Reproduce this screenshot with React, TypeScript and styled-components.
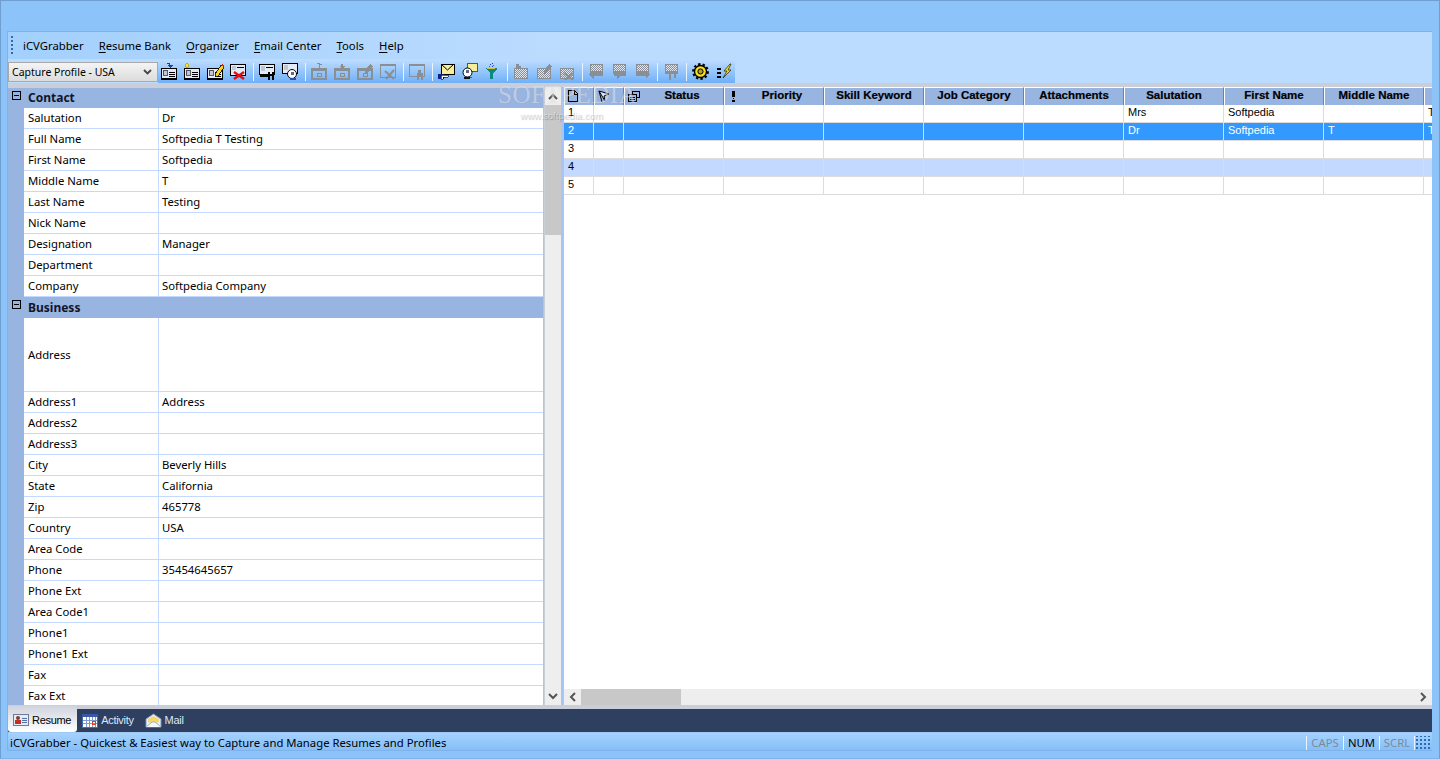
import React from "react";
import styled, { createGlobalStyle } from "styled-components";

const Global = createGlobalStyle`
  html, body { margin: 0; padding: 0; overflow: hidden; }
  body { font-family: "Noto Sans", "Liberation Sans", sans-serif; font-size: 11.3px; color: #000; }
`;

const Window = styled.div`
  box-sizing: border-box;
  width: 1440px;
  height: 759px;
  padding: 30px 7px 7px;
  background: #8cc4f9;
  border: 1px solid #6f9fd0;
  border-bottom-color: #7fb2e6;
  display: flex;
  flex-direction: column;
`;

const Frame = styled.div`
  flex: 1;
  min-height: 0;
  display: flex;
  flex-direction: column;
  position: relative;
  border-top: 1px solid #7fb2e8;
  border-left: 1px solid #7fb2e8;
  margin-left: -1px;
`;

const MenuBar = styled.div`
  height: 27px;
  flex: none;
  display: flex;
  align-items: center;
  background: linear-gradient(90deg, #a3d0fc, #bcdcff 40%);
  padding: 0 0 1px 3px;
  box-sizing: border-box;
`;

const Grip = styled.div`
  width: 2px;
  height: 18px;
  margin-right: 10px;
  background: repeating-linear-gradient(180deg, #2b6cb8 0 2px, transparent 2px 4px);
`;

const MenuItem = styled.span`
  margin-right: 15px;
  white-space: nowrap;
  u { text-underline-offset: 2px; }
`;

const ToolRow = styled.div`
  height: 24px;
  flex: none;
  display: flex;
  background: #bcdcff;
`;

const Combo = styled.div`
  box-sizing: border-box;
  width: 150px;
  height: 20px;
  margin-top: 3px;
  padding: 0 3px 1px;
  display: flex;
  align-items: center;
  justify-content: space-between;
  font-size: 10.5px;
  background: linear-gradient(180deg, #f4f4f4, #dcdcdc);
  border: 1px solid #a9a9a9;
  svg { margin-right: 2px; }
`;

const ToolBar = styled.div`
  display: flex;
  align-items: center;
  height: 23px;
  margin-top: 1px;
  width: 577px;
  box-sizing: border-box;
  background: linear-gradient(180deg, #bcdcff, #6fb0f7);
`;

const ToolBtn = styled.div`
  width: 23px;
  height: 18px;
  display: flex;
  justify-content: center;
`;

const ToolSep = styled.div`
  width: 1px;
  height: 18px;
  margin: 0 2.5px;
  background: #e8f4ff;
`;

const Strip = styled.div`
  height: 4px;
  flex: none;
  background: #c9ced9;
`;

const Body = styled.div`
  flex: 1;
  min-height: 0;
  display: flex;
  background: #c9ced9;
`;

const PropPanel = styled.div`
  width: 536px;
  flex: none;
  margin-top: 1px;
  overflow: hidden;
  background: #fff;
  border-right: 1px solid #a9c5f5;
  box-sizing: border-box;
`;

const SectionHead = styled.div<{ $h?: number }>`
  display: flex;
  height: ${(p) => p.$h ?? 21}px;
  background: #98b4e0;
  align-items: center;
  font-weight: bold;
  font-size: 12px;
  color: #10162a;
`;

const Toggle = styled.div`
  width: 16px;
  height: 100%;
  flex: none;
  display: flex;
  align-items: flex-start;
  justify-content: center;
  padding-top: 3px;
  box-sizing: border-box;
  span {
    display: block;
    box-sizing: border-box;
    width: 9px;
    height: 9px;
    border: 1px solid #000;
    background: linear-gradient(#000, #000) center / 5px 1px no-repeat;
  }
`;

const HeadLabel = styled.div`
  padding: 0 0 1px 4px;
`;

const PropRow = styled.div<{ $h?: number }>`
  display: flex;
  height: ${(p) => p.$h ?? 21}px;
  background: #98b4e0;
`;

const Gutter = styled.div`
  width: 16px;
  flex: none;
`;

const PropName = styled.div`
  width: 135px;
  flex: none;
  box-sizing: border-box;
  background: #fff;
  padding: 0 0 1px 4px;
  display: flex;
  align-items: center;
  border-right: 1px solid #c3d9ff;
  border-bottom: 1px solid #c3d9ff;
  white-space: nowrap;
`;

const PropValue = styled.div`
  flex: 1;
  box-sizing: border-box;
  background: #fff;
  padding: 0 0 1px 3px;
  display: flex;
  align-items: center;
  border-bottom: 1px solid #c3d9ff;
  white-space: nowrap;
`;

const VScroll = styled.div`
  width: 16px;
  flex: none;
  margin-left: 1px;
  display: flex;
  flex-direction: column;
  background: #eeeeee;
`;

const ScrollArrow = styled.div`
  height: 18px;
  flex: none;
  display: flex;
  align-items: center;
  justify-content: center;
  color: #555;
`;

const VThumb = styled.div`
  height: 130px;
  flex: none;
  background: #c8c8c8;
`;

const Spacer = styled.div`
  flex: 1;
`;

const Splitter = styled.div`
  width: 3px;
  flex: none;
  background: #a9c5f5;
`;

const GridPanel = styled.div`
  flex: 1;
  min-width: 0;
  display: flex;
  flex-direction: column;
  background: #fff;
`;

const GridBody = styled.div`
  flex: 1;
  min-height: 0;
  overflow: hidden;
`;

const HeadRow = styled.div`
  display: flex;
  height: 18px;
`;

const HeadCell = styled.div<{ $w: number; $icon?: boolean }>`
  width: ${(p) => p.$w}px;
  flex: none;
  box-sizing: border-box;
  padding: 0 0 3px ${(p) => (p.$icon ? 16 : 0)}px;
  background: #98b4e0;
  border-top: 1px solid #fff;
  border-left: 1px solid #fff;
  border-right: 1px solid #7f7f7f;
  display: flex;
  align-items: center;
  justify-content: center;
  font-family: "Liberation Sans", sans-serif;
  font-weight: bold;
  font-size: 11.5px;
  -webkit-text-stroke: 0.2px #000;
  position: relative;
  white-space: nowrap;
  svg { position: absolute; left: 2px; top: 1px; }
`;

const Row = styled.div<{ $kind?: "sel" | "alt" }>`
  display: flex;
  height: 18px;
  background: ${(p) => (p.$kind === "sel" ? "#3399ff" : p.$kind === "alt" ? "#c3d9ff" : "#fff")};
  color: ${(p) => (p.$kind === "sel" ? "#fff" : "#000")};
`;

const Cell = styled.div<{ $w: number }>`
  width: ${(p) => p.$w}px;
  flex: none;
  box-sizing: border-box;
  padding: 0 0 3px 4px;
  display: flex;
  align-items: center;
  font-family: "Liberation Sans", sans-serif;
  font-size: 11px;
  border-right: 1px solid #dcdcdc;
  border-bottom: 1px solid #dcdcdc;
  white-space: nowrap;
  overflow: hidden;
`;

const HScroll = styled.div`
  height: 16px;
  flex: none;
  display: flex;
  align-items: center;
  background: #eeeeee;
`;

const HArrow = styled.div`
  width: 17px;
  flex: none;
  display: flex;
  justify-content: center;
  color: #555;
`;

const HThumb = styled.div`
  width: 100px;
  height: 100%;
  flex: none;
  background: #c8c8c8;
`;

const TabsBar = styled.div`
  height: 28px;
  flex: none;
  box-sizing: border-box;
  border-top: 4px solid #c9ced9;
  border-bottom: 1px solid #9cc8f5;
  background: #2f3f5f;
  display: flex;
  font-family: "Liberation Sans", sans-serif;
  font-size: 11px;
`;

const Tab = styled.div<{ $active?: boolean }>`
  height: ${(p) => (p.$active ? 26 : 22)}px;
  margin-top: ${(p) => (p.$active ? -3 : 0)}px;
  padding: ${(p) => (p.$active ? "2px" : "0")} 6px 0 5px;
  box-sizing: border-box;
  display: flex;
  align-items: center;
  gap: 3px;
  color: ${(p) => (p.$active ? "#000" : "#dce8fa")};
  background: ${(p) => (p.$active ? "linear-gradient(180deg, #d0d4de, #fff)" : "transparent")};
  border-radius: 0 0 3px 3px;
  letter-spacing: -0.3px;
`;

const StatusBar = styled.div`
  height: 18px;
  flex: none;
  display: flex;
  align-items: center;
  justify-content: space-between;
  padding: 2px 0 0 2px;
  box-sizing: border-box;
  background: linear-gradient(180deg, #a6d2fd, #84bff9);
  border-bottom: 1px solid #7fb2e8;
  white-space: nowrap;
`;

const StatusPanes = styled.div`
  display: flex;
  align-items: center;
  height: 100%;
`;

const Pane = styled.div<{ $on?: boolean; $w: number }>`
  display: flex;
  align-items: center;
  justify-content: center;
  box-sizing: border-box;
  width: ${(p) => p.$w}px;
  height: 14px;
  border-left: 1px solid #eaf5ff;
  color: ${(p) => (p.$on ? "#000" : "#7e8a98")};
`;

const StatusGrip = styled.div`
  width: 18px;
  height: 14px;
  box-sizing: border-box;
  border-left: 1px solid #eaf5ff;
  background: radial-gradient(circle, #2b6cb8 1px, transparent 1.2px) 4px 2px / 4px 4px;
`;

const Watermark = styled.div`
  position: absolute;
  left: 490px;
  top: 49px;
  pointer-events: none;
  color: rgba(255, 255, 255, 0.42);
`;

const MarkTitle = styled.div`
  font-family: "Liberation Serif", serif;
  font-size: 25px;
  line-height: 27px;
  letter-spacing: 0.5px;
  text-shadow: 0 0 1px rgba(120, 130, 150, 0.25);
`;

const MarkUrl = styled.div`
  font-family: "Liberation Sans", sans-serif;
  font-size: 9.6px;
  line-height: 12px;
  margin: 2px 0 0 22px;
  text-shadow: 1px 1px 1px rgba(0, 0, 0, 0.25);
`;

const Box = ({ children, w = 17, h = 17 }: { children: React.ReactNode; w?: number; h?: number }) => (
  <svg width={w} height={h} viewBox={`0 0 ${w} ${h}`} shapeRendering="crispEdges" fill="none">
    {children}
  </svg>
);

const Card = ({ c = "#000" }: { c?: string }) => (
  <>
    <rect x="0.5" y="5.5" width="15" height="10" fill="#e4ebf6" stroke={c} />
    <rect x="0" y="15" width="16" height="2" fill={c} />
    <rect x="2" y="7" width="4" height="5" fill="#c0c8d6" stroke={c} strokeWidth="0.6" />
    <rect x="8" y="9" width="6" height="1" fill={c} />
    <rect x="8" y="11" width="6" height="1" fill={c} />
    <rect x="8" y="13" width="6" height="1" fill={c} />
  </>
);

const IconAdd = () => (
  <Box>
    <Card />
    <path d="M6 0h3v2h3l-3 3-3-3h2v-1H6z" fill="#1a3fb0" />
  </Box>
);
const IconNew = () => (
  <Box>
    <Card />
    <path d="M3 0l2 2-2 3-2-3z" fill="#f6e23a" stroke="#8a7a00" strokeWidth="0.5" />
  </Box>
);
const IconEdit = () => (
  <Box>
    <Card />
    <path d="M8 11l6-9 3 2-6 9-3 1z" fill="#f8d21c" stroke="#000" strokeWidth="0.8" />
    <path d="M14 2l1-1 2 2-1 1z" fill="#d02020" />
  </Box>
);
const IconDelete = () => (
  <Box>
    <rect x="0.5" y="1.5" width="15" height="11" fill="#e4ebf6" stroke="#000" />
    <rect x="2" y="3" width="4" height="4" fill="#c0c8d6" />
    <rect x="7" y="4" width="7" height="1" fill="#000" />
    <path d="M4 9l10 7M14 9l-10 7" stroke="#e01010" strokeWidth="2.4" shapeRendering="auto" />
  </Box>
);
const IconFind = () => (
  <Box>
    <rect x="0.5" y="1.5" width="15" height="10" fill="#e4ebf6" stroke="#000" />
    <rect x="2" y="3" width="4" height="5" fill="#c0c8d6" />
    <rect x="7" y="4" width="7" height="1" fill="#000" />
    <rect x="1" y="12" width="8" height="2" fill="#000" />
    <path d="M9 9h2v2h2V9h2v8h-2v-4h-2v4H9z" fill="#000" />
  </Box>
);
const IconPerson = () => (
  <Box>
    <rect x="0.5" y="0.5" width="15" height="10" fill="#e4ebf6" stroke="#000" />
    <rect x="2" y="2" width="4" height="5" fill="#c0c8d6" />
    <circle cx="10" cy="11" r="4.5" fill="#fff" stroke="#000" shapeRendering="auto" />
    <path d="M8 15h6v2H8z" fill="#30509a" />
    <path d="M9 9h3v3H9z" fill="#606a80" />
  </Box>
);
const G = "#8a8f96";
const IconTray = ({ kind }: { kind: "up" | "down" | "pen" }) => (
  <Box>
    <rect x="1" y="6" width="14" height="10" stroke={G} strokeWidth="2" fill="none" />
    <rect x="0" y="5" width="16" height="3" fill={G} />
    <rect x="6" y="10" width="4" height="3" stroke={G} fill="none" />
    {kind === "up" && <path d="M8 1h3v1h-2v3H8zM6 0l3 0 0 1H6z" fill={G} />}
    {kind === "down" && <path d="M7 1h2v2h2l-3 3-3-3h2z" fill={G} />}
    {kind === "pen" && <path d="M8 8l5-7 3 2-5 7-3 1z" fill={G} />}
  </Box>
);
const IconGrayX = () => (
  <Box>
    <rect x="0.5" y="1.5" width="15" height="13" stroke={G} fill="none" />
    <rect x="0" y="1" width="16" height="2" fill={G} />
    <path d="M5 8l9 8M14 7l-8 9" stroke={G} strokeWidth="2" shapeRendering="auto" />
  </Box>
);
const IconGrayFind = () => (
  <Box>
    <rect x="0.5" y="1.5" width="15" height="12" stroke={G} fill="none" />
    <rect x="0" y="1" width="16" height="2" fill={G} />
    <path d="M9 7h3v3h2v7h-2v-3h-2v3H8v-7h1z" fill={G} />
  </Box>
);
const IconMail = () => (
  <Box>
    <rect x="3" y="1" width="13" height="10" fill="#f6ef9a" stroke="#000" />
    <path d="M3 1l6.5 6L16 1" stroke="#000" shapeRendering="auto" />
    <rect x="0" y="11" width="6" height="5" fill="#10208a" />
    <path d="M3 12h7v2H5v2H3z" fill="#fff" stroke="#000" strokeWidth="0.6" />
  </Box>
);
const IconMailFind = () => (
  <Box>
    <rect x="6" y="0.5" width="10" height="8" fill="#f6ef9a" stroke="#555" />
    <circle cx="6.5" cy="9.5" r="4.5" fill="#fff" stroke="#000" shapeRendering="auto" />
    <path d="M3 14h6v2H3z" fill="#111" />
    <path d="M5 7h3v3H5z" fill="#606a80" />
    <path d="M9 14h2v1H9z" fill="#a030a0" />
  </Box>
);
const IconFilter = () => (
  <Box>
    <path d="M1 5h12v1l-4 4v6H6v-6L2 6z" fill="#0a8a80" />
    <path d="M3 5h8v1H3z" fill="#d0c040" />
    <path d="M6 1h1v1H6zM8 0h1v1H8zM8 3h1v1H8z" fill="#2040d0" />
    <path d="M5 3h1v1H5zM9 2h1v1H9z" fill="#d02080" />
  </Box>
);
const DotFill = ({ id }: { id: string }) => (
  <pattern id={id} width="2" height="2" patternUnits="userSpaceOnUse">
    <rect width="2" height="2" fill={G} />
    <rect width="1" height="1" fill="#dfe6ef" />
    <rect x="1" y="1" width="1" height="1" fill="#dfe6ef" />
  </pattern>
);
const IconGrayMail = ({ top }: { top: "up" | "pen" | "x" }) => (
  <Box>
    <DotFill id={`mail-${top}`} />
    <rect x="1" y="5" width="14" height="11" fill={G} />
    <rect x="2" y="6" width="12" height="9" fill={`url(#mail-${top})`} />
    {top === "up" && <path d="M3 1h3v2h2v2H3z" fill={G} />}
    {top === "pen" && <path d="M8 8l5-7 3 2-5 7-3 1z" fill={G} />}
    {top === "x" && <path d="M5 10l9 7M14 10l-8 7" stroke={G} strokeWidth="2" shapeRendering="auto" />}
  </Box>
);
const IconGrayBubble = ({ dir }: { dir: "left" | "down" | "right" | "clip" }) => (
  <Box>
    <DotFill id={`bubble-${dir}`} />
    <rect x="2" y="1" width="13" height="10" fill={G} />
    <rect x="3" y="2" width="11" height="6" fill={`url(#bubble-${dir})`} />
    {dir === "left" && <path d="M0 11h15v2H6v3z" fill={G} />}
    {dir === "down" && <path d="M3 11h12v2H9l-3 4v-4H3z" fill={G} />}
    {dir === "right" && <path d="M2 11h14l-4 5v-3H2z" fill={G} />}
    {dir === "clip" && <path d="M6 11h2v6H6zM11 11h2v4h-2z" fill={G} />}
  </Box>
);
const IconGear = () => (
  <Box>
    <circle cx="8.5" cy="8.5" r="6" fill="#f8e020" stroke="#000" strokeWidth="1.4" shapeRendering="auto" />
    <circle cx="8.5" cy="8.5" r="7.4" stroke="#000" strokeWidth="2" strokeDasharray="2.4 2.2" shapeRendering="auto" />
    <circle cx="8.5" cy="8.5" r="2.6" fill="#b8a010" stroke="#000" shapeRendering="auto" />
  </Box>
);
const IconBolt = () => (
  <Box>
    <path d="M2 5h4v2H2zM2 9h4v2H2zM2 13h4v2H2z" fill="#000" />
    <path d="M15 1L9 8h3l-4 7 8-8h-3l3-6z" fill="#f8e020" stroke="#000" strokeWidth="0.6" shapeRendering="auto" />
  </Box>
);

const ComboChevron = () => (
  <svg width="9" height="6" viewBox="0 0 9 6" fill="none">
    <path d="M1 1l3.5 3.5L8 1" stroke="#444" strokeWidth="1.8" />
  </svg>
);

const PageGlyph = () => (
  <Box w={12} h={14}>
    <path d="M1.5 1.5h6l3 3v8h-9z" fill="#98b4e0" stroke="#000" />
    <path d="M7 1v4h4" stroke="#000" />
  </Box>
);
const FlagGlyph = () => (
  <Box w={14} h={14}>
    <path d="M2 2l10 3-5 2 1 5z" fill="#dde6f6" stroke="#000" shapeRendering="auto" />
    <path d="M2 2l3 11" stroke="#000" shapeRendering="auto" />
  </Box>
);
const StackGlyph = () => (
  <Box w={14} h={14}>
    <rect x="5.5" y="2.5" width="7" height="6" fill="#98b4e0" stroke="#000" />
    <rect x="1.5" y="5.5" width="8" height="7" fill="#98b4e0" stroke="#000" />
    <path d="M3 8h5M3 10h5" stroke="#000" />
  </Box>
);
const BangGlyph = () => (
  <Box w={12} h={14}>
    <path d="M5 2h3v6H5zM6 9h1v1H6zM5 11h3v2H5z" fill="#000" />
  </Box>
);

const ResumeTabIcon = () => (
  <Box w={16} h={14}>
    <rect x="0.5" y="1.5" width="15" height="11" fill="#e6ecf6" stroke="#707a90" />
    <circle cx="5" cy="5" r="2" fill="#7a4030" shapeRendering="auto" />
    <rect x="2" y="7" width="6" height="4" fill="#c03020" />
    <path d="M9 5h5M9 7h5M9 9h5" stroke="#5070a8" />
  </Box>
);
const CalendarIcon = () => (
  <Box w={16} h={15}>
    <rect x="0.5" y="1.5" width="15" height="13" fill="#fff" stroke="#4a68b0" />
    <rect x="0" y="1" width="16" height="3" fill="#3a58a8" />
    <path d="M4 4v10M7 4v10M10 4v10M13 4v10M1 7h14M1 10h14" stroke="#7f9ad0" />
    <rect x="10" y="8" width="3" height="3" fill="none" stroke="#e04020" />
  </Box>
);
const EnvelopeIcon = () => (
  <Box w={17} h={15}>
    <path d="M1 6l7.5-5L16 6v8H1z" fill="#e8f0fa" stroke="#7f95b8" shapeRendering="auto" />
    <path d="M3 6l5.5-3L14 6v3l-5.5 2L3 9z" fill="#f6d86a" shapeRendering="auto" />
    <path d="M1 14l6-5h3l6 5" stroke="#9fb2d0" fill="#f4f8fe" shapeRendering="auto" />
  </Box>
);

const contact: [string, string][] = [
  ["Salutation", "Dr"],
  ["Full Name", "Softpedia T Testing"],
  ["First Name", "Softpedia"],
  ["Middle Name", "T"],
  ["Last Name", "Testing"],
  ["Nick Name", ""],
  ["Designation", "Manager"],
  ["Department", ""],
  ["Company", "Softpedia Company"],
];

const business: [string, string, number?][] = [
  ["Address", "", 74],
  ["Address1", "Address"],
  ["Address2", ""],
  ["Address3", ""],
  ["City", "Beverly Hills"],
  ["State", "California"],
  ["Zip", "465778"],
  ["Country", "USA"],
  ["Area Code", ""],
  ["Phone", "35454645657"],
  ["Phone Ext", ""],
  ["Area Code1", ""],
  ["Phone1", ""],
  ["Phone1 Ext", ""],
  ["Fax", ""],
  ["Fax Ext", ""],
];

const columns = [
  { w: 30, label: "", icon: <PageGlyph /> },
  { w: 30, label: "", icon: <FlagGlyph /> },
  { w: 100, label: "Status", icon: <StackGlyph /> },
  { w: 100, label: "Priority", icon: <BangGlyph /> },
  { w: 100, label: "Skill Keyword" },
  { w: 100, label: "Job Category" },
  { w: 100, label: "Attachments" },
  { w: 100, label: "Salutation" },
  { w: 100, label: "First Name" },
  { w: 100, label: "Middle Name" },
  { w: 100, label: "" },
];

const rows: { n: string; kind?: "sel" | "alt"; sal?: string; first?: string; mid?: string; last?: string }[] = [
  { n: "1", sal: "Mrs", first: "Softpedia", last: "T" },
  { n: "2", kind: "sel", sal: "Dr", first: "Softpedia", mid: "T", last: "T" },
  { n: "3" },
  { n: "4", kind: "alt" },
  { n: "5" },
];

const tools: React.ReactNode[][] = [
  [<IconAdd />, <IconNew />, <IconEdit />, <IconDelete />],
  [<IconFind />, <IconPerson />],
  [<IconTray kind="up" />, <IconTray kind="down" />, <IconTray kind="pen" />, <IconGrayX />],
  [<IconGrayFind />],
  [<IconMail />, <IconMailFind />, <IconFilter />],
  [<IconGrayMail top="up" />, <IconGrayMail top="pen" />, <IconGrayMail top="x" />],
  [<IconGrayBubble dir="left" />, <IconGrayBubble dir="down" />, <IconGrayBubble dir="right" />],
  [<IconGrayBubble dir="clip" />],
  [<IconGear />, <IconBolt />],
];

const menus = [
  { key: "", rest: "iCVGrabber" },
  { key: "R", rest: "esume Bank" },
  { key: "O", rest: "rganizer" },
  { key: "E", rest: "mail Center" },
  { key: "T", rest: "ools" },
  { key: "H", rest: "elp" },
];

const Props = ({ items }: { items: [string, string, number?][] }) => (
  <>
    {items.map(([name, value, h]) => (
      <PropRow key={name} $h={h}>
        <Gutter />
        <PropName>{name}</PropName>
        <PropValue>{value}</PropValue>
      </PropRow>
    ))}
  </>
);

export default function App() {
  return (
    <>
      <Global />
      <Window>
        <Frame>
          <MenuBar>
            <Grip />
            {menus.map((m) => (
              <MenuItem key={m.rest}>
                {m.key && <u>{m.key}</u>}
                {m.rest}
              </MenuItem>
            ))}
          </MenuBar>
          <ToolRow>
            <Combo>
              Capture Profile - USA
              <ComboChevron />
            </Combo>
            <ToolBar>
              {tools.map((group, i) => (
                <React.Fragment key={i}>
                  {i > 0 && <ToolSep />}
                  {group.map((icon, j) => (
                    <ToolBtn key={j}>{icon}</ToolBtn>
                  ))}
                </React.Fragment>
              ))}
            </ToolBar>
          </ToolRow>
          <Strip />
          <Body>
            <PropPanel>
              <SectionHead $h={20}>
                <Toggle>
                  <span />
                </Toggle>
                <HeadLabel>Contact</HeadLabel>
              </SectionHead>
              <Props items={contact} />
              <SectionHead>
                <Toggle>
                  <span />
                </Toggle>
                <HeadLabel>Business</HeadLabel>
              </SectionHead>
              <Props items={business} />
            </PropPanel>
            <VScroll>
              <ScrollArrow>
                <svg width="10" height="7" viewBox="0 0 10 7" fill="none">
                  <path d="M1 6l4-4 4 4" stroke="currentColor" strokeWidth="2" />
                </svg>
              </ScrollArrow>
              <VThumb />
              <Spacer />
              <ScrollArrow>
                <svg width="10" height="7" viewBox="0 0 10 7" fill="none">
                  <path d="M1 1l4 4 4-4" stroke="currentColor" strokeWidth="2" />
                </svg>
              </ScrollArrow>
            </VScroll>
            <Splitter />
            <GridPanel>
              <GridBody>
                <HeadRow>
                  {columns.map((c, i) => (
                    <HeadCell key={i} $w={c.w} $icon={!!c.icon && !!c.label}>
                      {c.icon}
                      {c.label}
                    </HeadCell>
                  ))}
                </HeadRow>
                {rows.map((r) => (
                  <Row key={r.n} $kind={r.kind}>
                    <Cell $w={30}>{r.n}</Cell>
                    <Cell $w={30} />
                    <Cell $w={100} />
                    <Cell $w={100} />
                    <Cell $w={100} />
                    <Cell $w={100} />
                    <Cell $w={100} />
                    <Cell $w={100}>{r.sal}</Cell>
                    <Cell $w={100}>{r.first}</Cell>
                    <Cell $w={100}>{r.mid}</Cell>
                    <Cell $w={100}>{r.last}</Cell>
                  </Row>
                ))}
              </GridBody>
              <HScroll>
                <HArrow>
                  <svg width="7" height="10" viewBox="0 0 7 10" fill="none">
                    <path d="M6 1L2 5l4 4" stroke="currentColor" strokeWidth="2" />
                  </svg>
                </HArrow>
                <HThumb />
                <Spacer />
                <HArrow>
                  <svg width="7" height="10" viewBox="0 0 7 10" fill="none">
                    <path d="M1 1l4 4-4 4" stroke="currentColor" strokeWidth="2" />
                  </svg>
                </HArrow>
              </HScroll>
            </GridPanel>
          </Body>
          <TabsBar>
            <Tab $active>
              <ResumeTabIcon />
              Resume
            </Tab>
            <Tab>
              <CalendarIcon />
              Activity
            </Tab>
            <Tab>
              <EnvelopeIcon />
              Mail
            </Tab>
          </TabsBar>
          <StatusBar>
            iCVGrabber - Quickest &amp; Easiest way to Capture and Manage Resumes and Profiles
            <StatusPanes>
              <Pane $w={37}>CAPS</Pane>
              <Pane $w={36} $on>NUM</Pane>
              <Pane $w={35}>SCRL</Pane>
              <StatusGrip />
            </StatusPanes>
          </StatusBar>
          <Watermark>
            <MarkTitle>SOFTPEDIA</MarkTitle>
            <MarkUrl>www.softpedia.com</MarkUrl>
          </Watermark>
        </Frame>
      </Window>
    </>
  );
}
